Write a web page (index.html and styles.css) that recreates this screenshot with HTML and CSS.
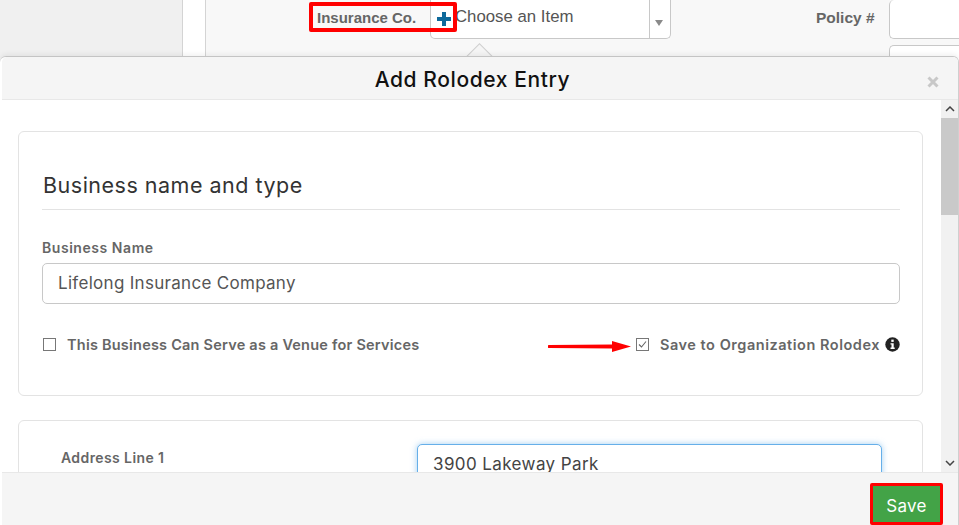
FILE: index.html
```html
<!DOCTYPE html>
<html lang="en">
<head>
<meta charset="utf-8">
<title>Add Rolodex Entry</title>
<link rel="stylesheet" href="styles.css">
</head>
<body>
<div class="page">
  <div class="side"></div>
  <div class="gutter"></div>
  <div class="main">
    <div class="top-row">
      <label class="top-label">Insurance Co.</label>
      <div class="select">
        <span class="plus"><svg width="14" height="14" viewBox="0 0 14 14"><path d="M5 0h4v5h5v4H9v5H5V9H0V5h5z" fill="#0f6a9b"/></svg></span>
        <span class="select-text">Choose an Item</span>
        <span class="select-arrow"><svg width="8" height="6" viewBox="0 0 8 6"><path d="M0 0h8L4 6z" fill="#8a8a8a"/></svg></span>
      </div>
      <label class="policy-label">Policy #</label>
      <div class="stack">
        <div class="policy-input"></div>
        <div class="policy-input"></div>
      </div>
    </div>
  </div>
</div>

<div class="caret"></div>

<section class="modal">
  <header class="modal-head">
    <h1 class="modal-title">Add Rolodex Entry</h1>
    <span class="close"><svg width="12" height="12" viewBox="0 0 12 12"><path d="M1.500 1.500l9 9M10.500 1.500l-9 9" stroke="#c8c8c8" stroke-width="3"/></svg></span>
  </header>
  <div class="modal-main">
    <div class="modal-body">
      <div class="card card-first">
        <h2 class="card-title">Business name and type</h2>
        <label class="field-label">Business Name</label>
        <div class="input">Lifelong Insurance Company</div>
        <div class="check-row">
          <div class="check">
            <span class="box"></span>
            <span class="check-text">This Business Can Serve as a Venue for Services</span>
          </div>
          <div class="check">
            <span class="box"><svg width="13" height="13" viewBox="0 0 13 13"><path d="M3 6.500l2.500 2.500L10 3.500" fill="none" stroke="#666" stroke-width="1.100"/></svg></span>
            <span class="check-text check-text-wide">Save to Organization Rolodex</span>
            <svg class="info" width="15" height="15" viewBox="0 0 15 15"><circle cx="7.500" cy="7.500" r="7.200" fill="#222"/><rect x="6.300" y="2.600" width="2.400" height="2.300" fill="#fff"/><path d="M5.500 6.200h3.200v4.400h1v1.300H5.500v-1.300h1V7.500h-1z" fill="#fff"/></svg>
          </div>
        </div>
      </div>
      <div class="card card-second">
        <label class="addr-label">Address Line 1</label>
        <div class="input input-focus">3900 Lakeway Park</div>
      </div>
    </div>
    <div class="scrollbar">
      <span class="sb-btn"><svg width="10" height="6" viewBox="0 0 10 6"><path d="M1 5l4-4 4 4" fill="none" stroke="#444" stroke-width="1.500"/></svg></span>
      <span class="sb-thumb"></span>
      <span class="sb-space"></span>
      <span class="sb-btn"><svg width="10" height="6" viewBox="0 0 10 6"><path d="M1 1l4 4 4-4" fill="none" stroke="#444" stroke-width="1.500"/></svg></span>
    </div>
  </div>
  <footer class="modal-foot">
    <button class="save">Save</button>
  </footer>
</section>

<div class="mark mark-label"></div>
<svg class="arrow" width="84" height="13" viewBox="0 0 84 13"><path d="M1 5l63-.5V1l19 5.500L64 12V8.500L1 8a1.500 1.500 0 0 1 0-3z" fill="#f00"/></svg>
</body>
</html>
```

FILE: styles.css
```css
* { box-sizing: border-box; }
html, body { margin: 0; height: 100%; overflow: hidden; background: #fff; }
body { font-family: Inter, "Liberation Sans", sans-serif; color: #666; position: relative; }

.page { display: flex; height: 525px; }
.side { width: 183px; background: #f0f0f0; border-right: 1px solid #d4d4d4; }
.gutter { width: 23px; background: #fff; border-right: 1px solid #d4d4d4; }
.main { flex: 1; background: #f8f8f8; }

.top-row { display: flex; align-items: flex-start; }
.top-label { margin: 9px 0 0 111px; width: 113px; font: bold 15px/17px "Liberation Sans", sans-serif; color: #666; }
.select { display: flex; width: 241px; height: 39px; background: #fff; border: 1px solid #c8c8c8; border-top: 0; border-radius: 0 0 5px 5px; }
.plus { width: 24px; padding: 12px 0 0 6px; display: flex; }
.plus svg { flex: none; }
.select-text { flex: 1; font: 16.800px/33px "Liberation Sans", sans-serif; color: #555; }
.select-arrow { width: 21px; border-left: 1px solid #c8c8c8; padding: 10px 0 0 5px; }
.policy-label { margin: 9px 0 0 145px; width: 73px; font: bold 15.500px/17px "Liberation Sans", sans-serif; color: #666; }
.stack { display: flex; flex-direction: column; gap: 6px; flex: 1; }
.policy-input { height: 39px; background: #fff; border: 1px solid #c8c8c8; border-right: 0; border-radius: 5px 0 0 5px; }
.policy-input:first-child { border-top: 0; }

.caret { position: absolute; left: 470px; top: 47px; width: 19px; height: 19px; background: #f5f5f5; border: 1px solid #cfcfcf; transform: rotate(45deg); }

.modal { position: absolute; left: 0; top: 56px; width: 959px; height: 469px; display: flex; flex-direction: column; background: #fff; border-top: 1px solid #c4c4c4; border-right: 1px solid #cfcfcf; border-radius: 6px 6px 0 0; padding-left: 2px; box-shadow: 0 -2px 5px rgba(0,0,0,.06); }
.modal-head { display: flex; justify-content: center; align-items: center; position: relative; height: 43px; padding: 3px 0 0 0; background: #f5f5f5; border-bottom: 1px solid #e8e8e8; border-radius: 5px 5px 0 0; flex: none; }
.modal-title { margin: 0 15px 0 0; font-size: 21px; font-weight: 500; letter-spacing: .6px; color: #111; }
.close { position: absolute; top: 19px; right: 19px; display: flex; }

.modal-main { display: flex; flex: 1; min-height: 0; }
.modal-body { flex: 1; min-width: 0; padding: 31px 18px 0 16px; overflow: hidden; }
.scrollbar { width: 17px; background: #f1f1f1; display: flex; flex-direction: column; flex: none; }
.sb-btn { height: 18px; display: flex; align-items: center; justify-content: center; flex: none; }
.sb-thumb { height: 97px; background: #c9c9c9; flex: none; }
.sb-space { flex: 1; }

.card { border: 1px solid #e3e3e3; border-radius: 6px; background: #fff; }
.card-first { height: 265px; padding: 0 22px 0 23px; }
.card-second { margin-top: 24px; height: 100px; padding: 24px 40px 0 42px; display: flex; }
.card-title { margin: 39px 0 0 0; padding-left: 1px; height: 39px; font-size: 21.500px; line-height: 29px; font-weight: 400; letter-spacing: .5px; color: #333; border-bottom: 1px solid #e3e3e3; }
.field-label { display: block; margin-top: 29px; font-size: 14px; line-height: 17px; font-weight: 600; letter-spacing: .55px; color: #666; }
.input { height: 41px; margin: 7px 0 0 0; padding: 0 15px; background: #fff; border: 1px solid #c8c8c8; border-radius: 5px; font-size: 17px; line-height: 39px; letter-spacing: .3px; color: #555; }
.check-row { display: flex; justify-content: space-between; margin-top: 31px; }
.check { display: flex; align-items: center; height: 18px; }
.box { width: 13px; height: 13px; border: 1px solid #777; display: flex; margin: 0 11px 0 1px; }
.box svg { margin: -1px; flex: none; }
.check-text { font-size: 14.500px; font-weight: 600; letter-spacing: .22px; color: #666; }
.check-text-wide { letter-spacing: .53px; }
.info { margin-left: 5px; }
.addr-label { width: 356px; margin-top: 4px; font-size: 14px; font-weight: 600; line-height: 17px; letter-spacing: .4px; color: #666; flex: none; }
.input-focus { flex: 1; margin: -1px 0 0 0; height: 45px; border-color: #66afe9; box-shadow: 0 0 6px rgba(102,175,233,.6); line-height: 39px; letter-spacing: .4px; color: #444; }

.modal-foot { height: 53px; flex: none; background: #f5f5f5; border-top: 1px solid #e8e8e8; display: flex; justify-content: flex-end; position: relative; z-index: 1; }
.save { width: 73px; height: 42px; margin: 10px 15px 0 0; background: #43a347; border: 3px solid #f00; border-radius: 2px; color: #fff; font-family: Inter, sans-serif; font-size: 17px; font-weight: 400; letter-spacing: .3px; padding: 3px 0 0; }

.mark { position: absolute; border: 4px solid #f00; border-radius: 2px; pointer-events: none; }
.mark-label { left: 309px; top: 2px; width: 148px; height: 30px; }
.arrow { position: absolute; left: 548px; top: 340px; }
```
